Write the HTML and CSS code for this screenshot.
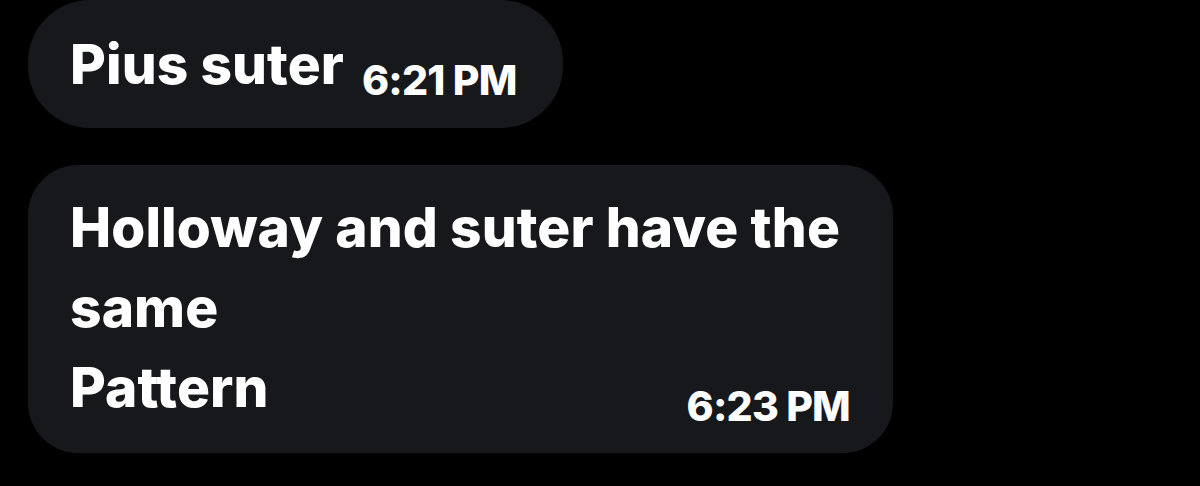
FILE: index.html
```html
<!DOCTYPE html>
<html lang="en">
  <head>
    <meta charset="UTF-8" />
    <meta name="viewport" content="width=device-width, initial-scale=1.0" />
    <title>Messages</title>
    <link rel="stylesheet" href="styles.css">
  </head>
  <body>
    <div class="chat">
      <div class="bubble bubble-short">
        <span class="msg">Pius suter</span>
        <span class="time">6:21 PM</span>
      </div>

      <div class="bubble bubble-long">
        <div class="msg">Holloway and suter have the<br />same<br />Pattern</div>
        <span class="time">6:23 PM</span>
      </div>
    </div>
  </body>
</html>
```

FILE: styles.css
```css
html,
body {
  margin: 0;
  background-color: #000000;
}

body {
  font-family: Inter, "Noto Sans", sans-serif;
  font-weight: 800;
  color: #ffffff;
}

.chat {
  display: flex;
  flex-direction: column;
  align-items: flex-start;
  gap: 37px;
  padding-left: 28px;
}

.bubble {
  background-color: #16181b;
  box-sizing: border-box;
}

.msg {
  font-size: 55px;
  line-height: 80px;
  letter-spacing: 0.1px;
}

.time {
  font-size: 41px;
  line-height: 41px;
  letter-spacing: -0.8px;
}

/* first message, single line */
.bubble-short {
  display: flex;
  align-items: flex-start;
  height: 128px;
  padding: 24px 46px 0 42px;
  border-radius: 62px;
}

.bubble-short .time {
  margin-left: 18px;
  margin-top: 36px;
}

/* second message, time sits in the last line's corner */
.bubble-long {
  display: grid;
  width: 865px;
  padding: 22px 43px 26px 42px;
  border-radius: 50px;
}

.bubble-long .msg,
.bubble-long .time {
  grid-area: 1 / 1;
}

.bubble-long .time {
  justify-self: end;
  align-self: end;
}
```
